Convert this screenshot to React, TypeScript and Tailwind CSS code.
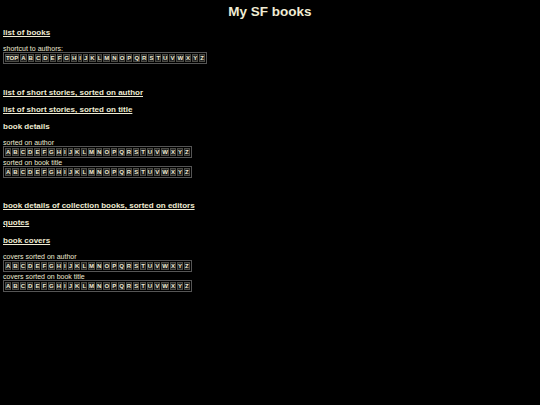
import React from "react";

const LETTERS = "ABCDEFGHIJKLMNOPQRSTUVWXYZ".split("");

const linkClass = "block text-[8px] font-bold underline leading-[10px]";
const noteClass = "text-[7px] leading-[7px]";

const LetterBar = ({ top = false }: { top?: boolean }) => (
  <table className="border border-[#555] border-separate border-spacing-[1px] ml-[3px]">
    <tbody>
      <tr>
        {(top ? ["TOP", ...LETTERS] : LETTERS).map((l) => (
          <td
            key={l}
            className="border border-[#4a4a44] bg-[#222] p-0 text-[6px] font-bold leading-[6px] text-center"
          >
            {l}
          </td>
        ))}
      </tr>
    </tbody>
  </table>
);

export default function App() {
  return (
    <div
      className="min-h-[405px] w-[540px] bg-black text-[#efebd3]"
      style={{ fontFamily: '"Liberation Sans", Arial, sans-serif' }}
    >
      <h1 className="pt-[4px] text-center text-[13.5px] font-bold leading-[16px]">My SF books</h1>

      <div className="flex flex-col px-[3px]">
        <a className={`${linkClass} mt-[8px]`}>list of books</a>
        <p className={`${noteClass} mt-[7px]`}>shortcut to authors:</p>
      </div>
      <LetterBar top />

      <div className="flex flex-col px-[3px]">
        <a className={`${linkClass} mt-[24px]`}>list of short stories, sorted on author</a>
        <a className={`${linkClass} mt-[7px]`}>list of short stories, sorted on title</a>
        <h3 className="text-[8px] font-bold leading-[10px] mt-[7px]">book details</h3>
        <p className={`${noteClass} mt-[7px]`}>sorted on author</p>
      </div>
      <LetterBar />
      <p className={`${noteClass} px-[3px] pt-[1px]`}>sorted on book title</p>
      <LetterBar />

      <div className="flex flex-col px-[3px]">
        <a className={`${linkClass} mt-[23px]`}>book details of collection books, sorted on editors</a>
        <a className={`${linkClass} mt-[7px]`}>quotes</a>
        <a className={`${linkClass} mt-[8px]`}>book covers</a>
        <p className={`${noteClass} mt-[7px]`}>covers sorted on author</p>
      </div>
      <LetterBar />
      <p className={`${noteClass} px-[3px] pt-[1px]`}>covers sorted on book title</p>
      <LetterBar />
    </div>
  );
}
